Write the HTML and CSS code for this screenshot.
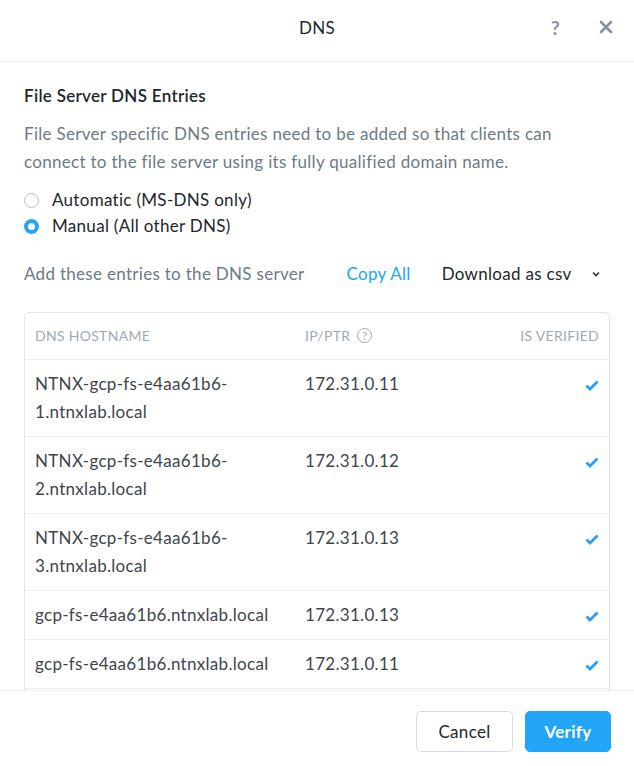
FILE: index.html
```html
<!DOCTYPE html>
<html lang="en">
<head>
    <meta charset="UTF-8">
    <meta name="viewport" content="width=device-width, initial-scale=1.0">
    <title>DNS</title>
    <link rel="stylesheet" href="styles.css">
</head>
<body>
    <div class="dialog">
        <div class="header">
            <span class="title">DNS</span>
            <div class="header-actions">
                <span class="help">?</span>
                <svg class="close" width="14" height="14" viewBox="0 0 14 14">
                    <path d="M2 2 L12 12 M12 2 L2 12" stroke="#8593a3" stroke-width="2.6" stroke-linecap="round"/>
                </svg>
            </div>
        </div>

        <div class="content">
            <h3>File Server DNS Entries</h3>
            <p class="desc">File Server specific DNS entries need to be added so that clients can connect to the file server using its fully qualified domain name.</p>

            <div class="radios">
                <label class="radio"><span class="dot"></span>Automatic (MS-DNS only)</label>
                <label class="radio checked"><span class="dot"></span>Manual (All other DNS)</label>
            </div>

            <div class="toolbar">
                <span class="hint">Add these entries to the DNS server</span>
                <a href="#" class="copy">Copy All</a>
                <span class="download">Download as csv</span>
                <svg class="chevron" width="8" height="6" viewBox="0 0 8 6">
                    <path d="M1 1.5 L4 4.5 L7 1.5" fill="none" stroke="#333" stroke-width="1.6"/>
                </svg>
            </div>

            <div class="table">
                <div class="row head">
                    <div class="col host">DNS HOSTNAME</div>
                    <div class="col ip">IP/PTR <span class="qmark">?</span></div>
                    <div class="col ok">IS VERIFIED</div>
                </div>
                <div class="row">
                    <div class="col host">NTNX-gcp-fs-e4aa61b6-<br>1.ntnxlab.local</div>
                    <div class="col ip">172.31.0.11</div>
                    <div class="col ok"><svg width="14" height="11" viewBox="0 0 14 11"><path d="M1.5 5.5 L5 9 L12.5 1.5" fill="none" stroke="#2a9df4" stroke-width="2.8"/></svg></div>
                </div>
                <div class="row">
                    <div class="col host">NTNX-gcp-fs-e4aa61b6-<br>2.ntnxlab.local</div>
                    <div class="col ip">172.31.0.12</div>
                    <div class="col ok"><svg width="14" height="11" viewBox="0 0 14 11"><path d="M1.5 5.5 L5 9 L12.5 1.5" fill="none" stroke="#2a9df4" stroke-width="2.8"/></svg></div>
                </div>
                <div class="row">
                    <div class="col host">NTNX-gcp-fs-e4aa61b6-<br>3.ntnxlab.local</div>
                    <div class="col ip">172.31.0.13</div>
                    <div class="col ok"><svg width="14" height="11" viewBox="0 0 14 11"><path d="M1.5 5.5 L5 9 L12.5 1.5" fill="none" stroke="#2a9df4" stroke-width="2.8"/></svg></div>
                </div>
                <div class="row">
                    <div class="col host">gcp-fs-e4aa61b6.ntnxlab.local</div>
                    <div class="col ip">172.31.0.13</div>
                    <div class="col ok"><svg width="14" height="11" viewBox="0 0 14 11"><path d="M1.5 5.5 L5 9 L12.5 1.5" fill="none" stroke="#2a9df4" stroke-width="2.8"/></svg></div>
                </div>
                <div class="row">
                    <div class="col host">gcp-fs-e4aa61b6.ntnxlab.local</div>
                    <div class="col ip">172.31.0.11</div>
                    <div class="col ok"><svg width="14" height="11" viewBox="0 0 14 11"><path d="M1.5 5.5 L5 9 L12.5 1.5" fill="none" stroke="#2a9df4" stroke-width="2.8"/></svg></div>
                </div>
                <div class="row spacer"></div>
            </div>
        </div>

        <div class="footer">
            <button class="btn cancel">Cancel</button>
            <button class="btn verify">Verify</button>
        </div>
    </div>
</body>
</html>
```

FILE: styles.css
```css
* {
    box-sizing: border-box;
}
body {
    margin: 0;
    padding: 0;
    background: #fff;
    font-family: Lato, "Open Sans", sans-serif;
    letter-spacing: 0.3px;
    color: #22272e;
}
.dialog {
    display: flex;
    flex-direction: column;
    width: 634px;
    height: 766px;
    background: #fff;
}
.header {
    flex: 0 0 62px;
    display: flex;
    align-items: center;
    justify-content: center;
    position: relative;
    padding-bottom: 7px;
    border-bottom: 1px solid #eef0f2;
}
.title {
    font-size: 17px;
    color: #22272e;
}
.header-actions {
    position: absolute;
    right: 21px;
    top: 0;
    height: 100%;
    padding-bottom: 7px;
    display: flex;
    align-items: center;
    gap: 39px;
}
.help {
    font-size: 19px;
    font-weight: bold;
    color: #8593a3;
}
.content {
    flex: 1;
    overflow: hidden;
    padding: 20px 24px 0 24px;
}
h3 {
    margin: 0 0 10px 0;
    font-size: 17px;
    font-weight: 600;
    color: #22272e;
    line-height: 28px;
}
.desc {
    margin: 0;
    font-size: 17px;
    line-height: 28px;
    color: #6d7a87;
}
.radios {
    margin-top: 11px;
    display: flex;
    flex-direction: column;
}
.radio {
    display: flex;
    align-items: center;
    font-size: 17px;
    line-height: 26px;
    color: #22272e;
}
.dot {
    width: 15px;
    height: 15px;
    border-radius: 50%;
    border: 1px solid #b8c0c8;
    margin-right: 13px;
    background: #fff;
}
.radio.checked .dot {
    border: 4.5px solid #22a5f7;
}
.toolbar {
    display: flex;
    align-items: center;
    margin-top: 21px;
    font-size: 17px;
    line-height: 28px;
}
.hint {
    color: #6d7a87;
}
.copy {
    margin-left: 42px;
    color: #22a5f7;
    text-decoration: none;
}
.download {
    margin-left: 31px;
    color: #22272e;
}
.chevron {
    margin-left: 20px;
}
.table {
    margin-top: 24px;
    border: 1px solid #e3e6e9;
    border-radius: 5px;
}
.row {
    display: flex;
    border-top: 1px solid #eceef0;
    font-size: 17px;
    line-height: 28px;
    color: #3e454d;
}
.row:first-child {
    border-top: none;
}
.row .col {
    padding: 10px;
}
.row .host {
    width: 270px;
}
.row .ip {
    flex: 1;
}
.row .ok {
    width: 160px;
    text-align: right;
    padding-right: 10px;
}
.row .ok svg {
    vertical-align: middle;
}
.row.head {
    font-size: 14px;
    color: #a0a9b3;
    height: 46px;
}
.row.head .col {
    padding-top: 9px;
}
.row.spacer {
    height: 40px;
}
.qmark {
    display: inline-flex;
    align-items: center;
    justify-content: center;
    width: 15px;
    height: 15px;
    border: 1px solid #a0a9b3;
    border-radius: 50%;
    font-size: 11px;
    line-height: 1;
    letter-spacing: 0;
    margin-left: 3px;
    vertical-align: 1px;
}
.footer {
    flex: 0 0 76px;
    display: flex;
    justify-content: flex-end;
    align-items: center;
    gap: 12px;
    padding: 5px 23px 0 0;
    border-top: 1px solid #eceef0;
}
.btn {
    height: 41px;
    border-radius: 5px;
    font-family: Lato, "Open Sans", sans-serif;
    letter-spacing: 0.3px;
    font-size: 17px;
    cursor: pointer;
}
.cancel {
    width: 97px;
    background: #fff;
    border: 1px solid #d8dde2;
    color: #22272e;
}
.verify {
    width: 86px;
    background: #22a5f7;
    border: 1px solid #22a5f7;
    color: #fff;
    font-weight: bold;
}
```
